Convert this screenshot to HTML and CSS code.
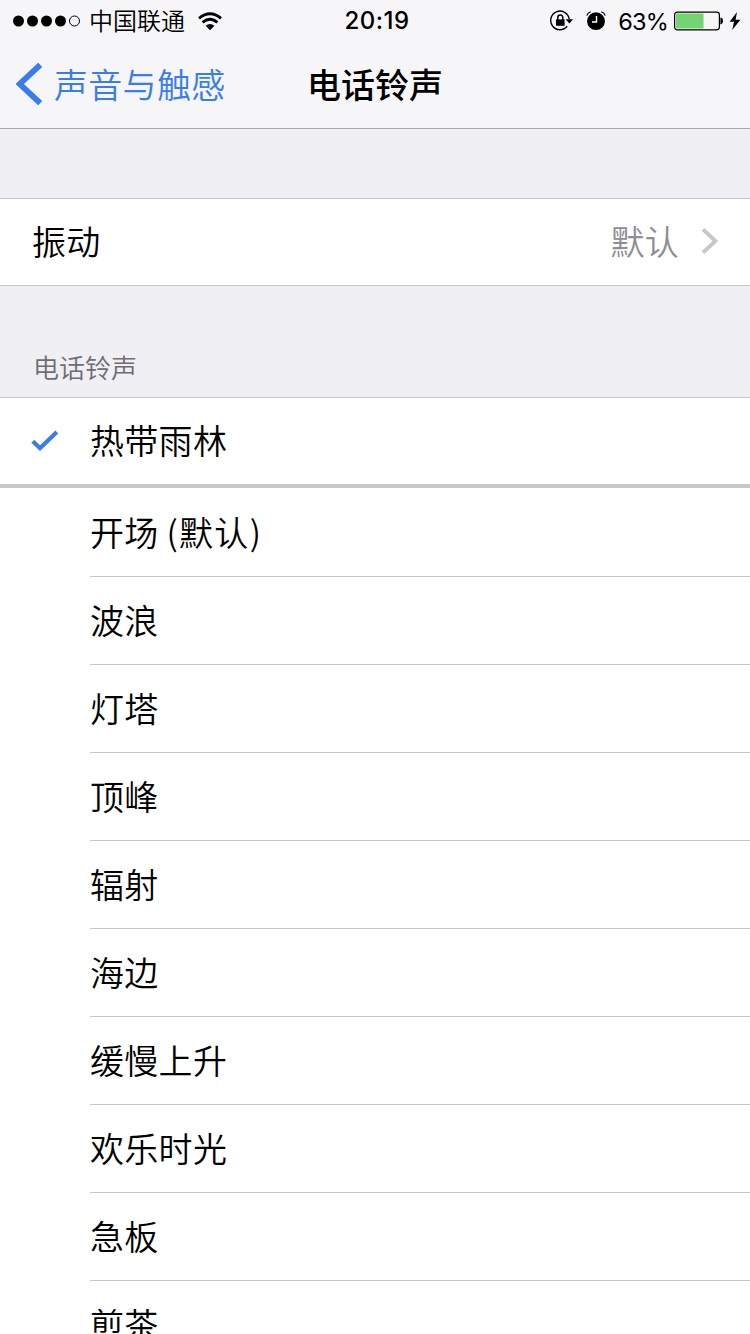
FILE: index.html
```html
<!DOCTYPE html>
<html lang="zh-CN">
<head>
<meta charset="UTF-8">
<meta name="viewport" content="width=device-width, initial-scale=1.0">
<title>电话铃声</title>
<link rel="stylesheet" href="styles.css">
</head>
<body>

<header>
  <div class="status">
    <div class="status-left">
      <svg width="68" height="12" viewBox="0 0 68 12">
        <circle cx="5.5" cy="6" r="5.5"/>
        <circle cx="19.5" cy="6" r="5.5"/>
        <circle cx="33.5" cy="6" r="5.5"/>
        <circle cx="47.5" cy="6" r="5.5"/>
        <circle cx="61.5" cy="6" r="5" fill="none" stroke="#000"/>
      </svg>
      <span class="carrier">中国联通</span>
      <svg class="wifi" width="24" height="19" viewBox="0 0 24 19">
        <g fill="none" stroke="#000" stroke-width="2.9">
          <path d="M1 6.3 Q12 -2.9 23 6.3"/>
          <path d="M4.6 10.4 Q12 4.2 19.4 10.4"/>
        </g>
        <path d="M7.6 13.8 Q12 10.2 16.4 13.8 L12 18.2Z"/>
      </svg>
    </div>
    <div class="time">20:19</div>
    <div class="status-right">
      <svg width="24" height="22" viewBox="0 0 24 22">
        <path d="M17.2 16.3A9.3 9.3 0 1 1 19.2 9" fill="none" stroke="#000" stroke-width="1.4"/>
        <path d="M15.6 9.2h7.4l-3.6 4.2z"/>
        <path d="M6 9.4h8.6v6.4H6z"/>
        <path d="M7.8 10V7.6a2.5 2.5 0 0 1 5 0V10" fill="none" stroke="#000" stroke-width="1.5"/>
      </svg>
      <svg class="alarm" width="20" height="20" viewBox="0 0 20 20">
        <circle cx="10" cy="10.2" r="8.9"/>
        <path d="M.8 4.6Q1.8 1.8 4.8.8M19.2 4.6Q18.2 1.8 15.2.8" fill="none" stroke="#000" stroke-width="1.2"/>
        <path d="M10.5 5v6H6" fill="none" stroke="#fff" stroke-width="1.4"/>
      </svg>
      <span class="percent">63%</span>
      <svg class="battery" width="50" height="20" viewBox="0 0 50 20">
        <rect x=".6" y="1.1" width="44.8" height="17.8" rx="2.8" fill="none" stroke="#000" stroke-width="1.2"/>
        <rect x="2" y="2.5" width="27.5" height="15" rx="1" fill="#72d572"/>
        <path d="M46.4 6.6q2.6.5 2.6 3.4t-2.6 3.4z"/>
      </svg>
      <svg class="bolt" width="12" height="20" viewBox="0 0 12 20">
        <path d="M8 1L.6 10.8H5L3.2 19 11.4 8.8H6.6z"/>
      </svg>
    </div>
  </div>
  <nav>
    <a class="back">
      <svg width="27" height="42" viewBox="0 0 27 42">
        <path d="M24.2 1.8L3.8 21l20.4 19.2" fill="none" stroke="#387cf0" stroke-width="5.8"/>
      </svg>
      <span>声音与触感</span>
    </a>
    <h1>电话铃声</h1>
  </nav>
</header>

<section class="vibration">
  <span>振动</span>
  <span class="value">默认</span>
  <svg width="17" height="28" viewBox="0 0 17 28">
    <path d="M2 1.4L14.4 13 2 24.6" fill="none" stroke="#c7c7c7" stroke-width="3.8"/>
  </svg>
</section>

<h2>电话铃声</h2>

<section class="selected">
  <svg width="28" height="24" viewBox="0 0 28 24">
    <path d="M1.8 12.2L9 19.2 25.8 3" fill="none" stroke="#387cf0" stroke-width="4.2"/>
  </svg>
  <span>热带雨林</span>
</section>

<ul>
  <li>开场 <span class="note">(默认)</span></li>
  <li>波浪</li>
  <li>灯塔</li>
  <li>顶峰</li>
  <li>辐射</li>
  <li>海边</li>
  <li>缓慢上升</li>
  <li>欢乐时光</li>
  <li>急板</li>
  <li>煎茶</li>
</ul>

</body>
</html>
```
FILE: styles.css
```css
* {
  box-sizing: border-box;
}
body {
  font-family: "Noto Sans CJK SC", sans-serif;
  font-size: 34px;
  font-weight: 350;
  letter-spacing: 0.3px;
  margin: 0;
  height: 1334px;
  overflow: hidden;
  background: #efeff4;
  color: #000;
}
svg {
  flex: none;
  display: block;
}
header {
  height: 129px;
  background: #f6f6f8;
  border-bottom: 1px solid #a9a9ac;
}
.status {
  display: grid;
  grid-template-columns: 1fr auto 1fr;
  height: 40px;
  padding: 0 9px 0 13px;
  line-height: 40px;
}
.status-left, .status-right {
  display: flex;
  align-items: center;
}
.status-right {
  justify-content: flex-end;
}
.carrier {
  margin-left: 8px;
  padding-bottom: 2px;
  font-size: 24px;
  letter-spacing: 0;
}
.wifi {
  margin-left: 13px;
}
.time {
  padding-top: 1px;
  font-family: Inter, sans-serif;
  font-size: 24px;
  font-weight: 500;
  letter-spacing: 0.5px;
}
.alarm {
  margin-left: 12px;
}
.percent {
  margin-left: 12px;
  padding-top: 1px;
  font-family: Inter, sans-serif;
  font-size: 23.5px;
  font-weight: 400;
  letter-spacing: -0.8px;
}
.battery {
  margin-left: 6px;
}
.bolt {
  margin-left: 5px;
}
nav {
  display: grid;
  grid-template-columns: 1fr auto 1fr;
  align-items: center;
  height: 88px;
}
.back {
  display: flex;
  align-items: center;
  padding-left: 16px;
  gap: 11px;
  color: #387cf0;
}
.back span, h1 {
  padding-bottom: 2px;
}
.vibration span, .selected span {
  padding-bottom: 3px;
}
h1 {
  margin: 0;
  font-size: 34px;
  font-weight: 500;
  letter-spacing: 0;
}
.vibration {
  display: flex;
  align-items: center;
  height: 88px;
  margin-top: 69px;
  padding: 0 32px;
  background: #fff;
  border-top: 1px solid #c8c7cc;
  border-bottom: 1px solid #c8c7cc;
}
.value {
  margin-left: auto;
  margin-right: 22px;
  color: #8e8e93;
}
h2 {
  margin: 0;
  height: 111px;
  padding: 61px 0 0 33px;
  font-size: 26px;
  font-weight: 350;
  line-height: 40px;
  letter-spacing: 0;
  color: #6d6d72;
}
.selected {
  display: flex;
  align-items: center;
  gap: 31px;
  height: 91px;
  padding-left: 31px;
  background: #fff;
  border-top: 1px solid #c8c7cc;
  border-bottom: 4px solid #c8c8c8;
}
ul {
  margin: 0;
  padding: 0 0 0 90px;
  background: #fff;
  list-style: none;
}
li {
  height: 88px;
  line-height: 85px;
  border-bottom: 1px solid #c8c7cc;
}
li:first-child {
  height: 89px;
  line-height: 87px;
}
.note {
  letter-spacing: 1.3px;
}
```
